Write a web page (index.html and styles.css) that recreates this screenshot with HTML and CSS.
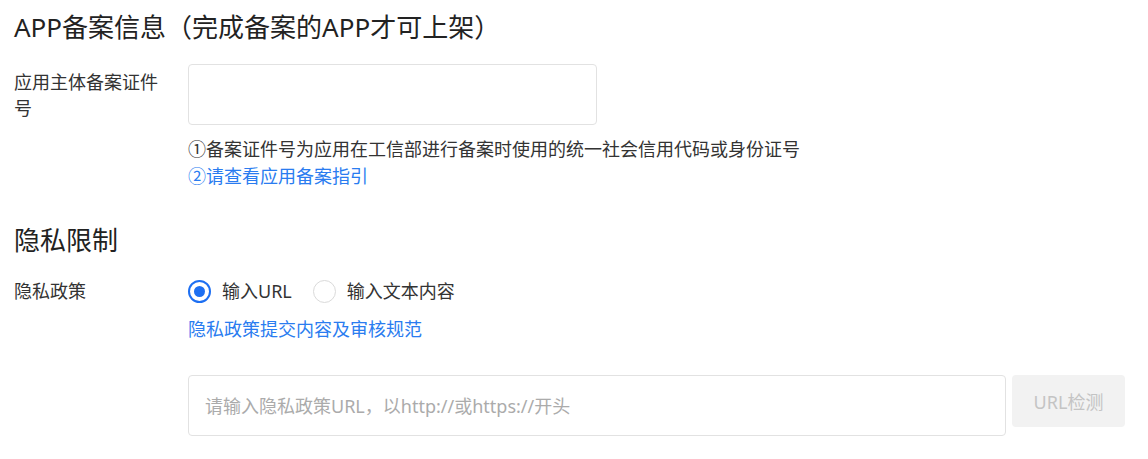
FILE: index.html
```html
<!DOCTYPE html>
<html lang="zh-CN">
<head>
    <meta charset="UTF-8">
    <meta name="viewport" content="width=device-width, initial-scale=1.0">
    <title>APP备案信息</title>
    <link rel="stylesheet" href="styles.css">
</head>
<body>
    <div class="page">
        <h2 class="section-title">APP备案信息（完成备案的APP才可上架）</h2>

        <div class="form-row row-record">
            <label class="form-label">应用主体备案证件号</label>
            <div class="form-field">
                <input class="text-input record-input" type="text">
                <div class="hint">
                    <div class="hint-line">①备案证件号为应用在工信部进行备案时使用的统一社会信用代码或身份证号</div>
                    <a class="link" href="#">②请查看应用备案指引</a>
                </div>
            </div>
        </div>

        <h2 class="section-title privacy-title">隐私限制</h2>

        <div class="form-row row-privacy">
            <label class="form-label">隐私政策</label>
            <div class="form-field">
                <div class="radio-group">
                    <label class="radio checked">
                        <span class="radio-dot"></span>
                        <span class="radio-text">输入URL</span>
                    </label>
                    <label class="radio">
                        <span class="radio-dot"></span>
                        <span class="radio-text">输入文本内容</span>
                    </label>
                </div>
                <a class="link policy-link" href="#">隐私政策提交内容及审核规范</a>
            </div>
        </div>

        <div class="form-row row-url">
            <div class="form-label"></div>
            <div class="form-field url-field">
                <input class="text-input url-input" type="text" placeholder="请输入隐私政策URL，以http://或https://开头">
                <button class="check-btn" type="button">URL检测</button>
            </div>
        </div>
    </div>
</body>
</html>
```

FILE: styles.css
```css
body {
    margin: 0;
    background-color: #fff;
    font-family: 'Noto Sans', 'Noto Sans CJK SC', sans-serif;
    color: #333;
}

.page {
    padding: 8px 14px 0;
}

.section-title {
    margin: 0;
    font-size: 26px;
    font-weight: normal;
    line-height: 38px;
    color: #222;
}

.privacy-title {
    margin-top: 31px;
}

.form-row {
    display: flex;
    align-items: flex-start;
}

.row-record {
    margin-top: 18px;
}

.row-privacy {
    margin-top: 19px;
}

.row-url {
    margin-top: 32px;
}

.form-label {
    width: 152px;
    padding-right: 22px;
    flex-shrink: 0;
    font-size: 18px;
    line-height: 26px;
    color: #333;
}

.row-record .form-label {
    padding-top: 5px;
}

.form-field {
    display: flex;
    flex-direction: column;
    align-items: flex-start;
}

.text-input {
    box-sizing: border-box;
    height: 61px;
    border: 1px solid #e2e2e2;
    border-radius: 4px;
    padding: 0 16px;
    font-family: inherit;
    font-size: 18px;
    color: #333;
    outline: none;
}

.text-input::placeholder {
    color: #ababab;
}

.record-input {
    width: 409px;
}

.hint {
    margin-top: 11px;
    font-size: 18px;
    line-height: 27px;
}

.hint-line {
    color: #333;
}

.link {
    color: #2a7cf0;
    text-decoration: none;
    font-size: 18px;
    line-height: 27px;
}

.radio-group {
    display: flex;
    gap: 21px;
    height: 26px;
    align-items: center;
}

.radio {
    display: flex;
    align-items: center;
    gap: 11px;
    cursor: pointer;
    font-size: 18px;
    line-height: 26px;
    color: #333;
}

.radio-dot {
    box-sizing: border-box;
    width: 23px;
    height: 23px;
    border: 1px solid #dadada;
    border-radius: 50%;
    background-color: #fff;
    display: flex;
    align-items: center;
    justify-content: center;
}

.radio.checked .radio-dot {
    border: 2px solid #1d6ff2;
}

.radio.checked .radio-dot::after {
    content: '';
    width: 11px;
    height: 11px;
    border-radius: 50%;
    background-color: #1d6ff2;
}

.policy-link {
    margin-top: 12px;
}

.url-field {
    flex-direction: row;
    gap: 6px;
}

.url-input {
    width: 818px;
}

.check-btn {
    width: 113px;
    height: 52px;
    border: none;
    border-radius: 4px;
    background-color: #f2f2f2;
    color: #c4c4c4;
    font-family: inherit;
    font-size: 18px;
    cursor: not-allowed;
}
```
